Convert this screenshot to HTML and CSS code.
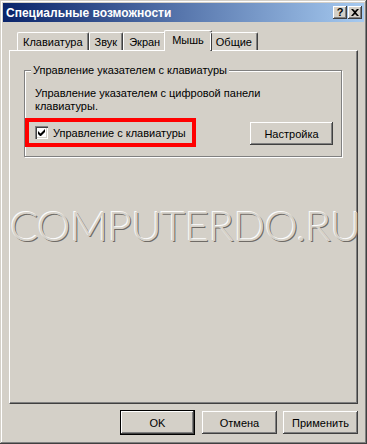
FILE: index.html
```html
<!DOCTYPE html>
<html lang="ru">
<head>
    <meta charset="UTF-8">
    <title>Специальные возможности</title>
    <link rel="stylesheet" href="styles.css">
</head>
<body>
    <div class="window">
        <div class="titlebar">
            <span class="title">Специальные возможности</span>
            <div class="caption-buttons">
                <span class="caption-btn">?</span>
                <span class="caption-btn">
                    <svg width="8" height="7" viewBox="0 0 8 7"><path d="M0 0h2l2 2 2-2h2L5 3.5 8 7H6L4 5 2 7H0l3-3.5z" fill="#000"/></svg>
                </span>
            </div>
        </div>

        <div class="tabs">
            <div class="tab">Клавиатура</div>
            <div class="tab">Звук</div>
            <div class="tab">Экран</div>
            <div class="tab active">Мышь</div>
            <div class="tab">Общие</div>
        </div>

        <div class="panel">
            <div class="group">
                <span class="group-title">Управление указателем с клавиатуры</span>
                <p class="group-desc">Управление указателем с цифровой панели<br>клавиатуры.</p>
                <div class="group-row">
                    <label class="highlight">
                        <span class="checkbox">
                            <svg width="7" height="7" viewBox="0 0 7 7"><path d="M0 2v3l2 2h1l4-4V0L2.5 4.5z" fill="#000"/></svg>
                        </span>
                        Управление с клавиатуры
                    </label>
                    <button class="btn">Настройка</button>
                </div>
            </div>

            <div class="watermark">COMPUTERDO.RU</div>
        </div>

        <div class="actions">
            <button class="btn default">OK</button>
            <button class="btn">Отмена</button>
            <button class="btn">Применить</button>
        </div>
    </div>
</body>
</html>
```

FILE: styles.css
```css
body {
    margin: 0;
    background: #D4D0C8;
    font-family: "Liberation Sans", Arial, sans-serif;
    font-size: 11px;
    color: #000;
}

.window {
    width: 367px;
    height: 444px;
    box-sizing: border-box;
    padding: 3px;
    background: #D4D0C8;
    box-shadow: inset -1px -1px #404040, inset 1px 1px #D4D0C8, inset -2px -2px #808080, inset 2px 2px #fff;
    display: flex;
    flex-direction: column;
}

.titlebar {
    height: 19px;
    background: linear-gradient(90deg, #0A246A 0%, #A6CAF0 100%);
    display: flex;
    align-items: center;
    justify-content: space-between;
    padding: 0 2px 0 3px;
}

.title {
    color: #fff;
    font-weight: bold;
    font-size: 12px;
}

.caption-buttons {
    display: flex;
    gap: 1px;
}

.caption-btn {
    width: 14px;
    height: 13px;
    box-sizing: border-box;
    background: #D4D0C8;
    box-shadow: inset -1px -1px #404040, inset 1px 1px #fff, inset -2px -2px #808080;
    display: flex;
    align-items: center;
    justify-content: center;
    font-weight: bold;
    font-size: 11px;
    line-height: 1;
}

.tabs {
    display: flex;
    align-items: flex-end;
    height: 20px;
    margin: 8px 0 0 14px;
    position: relative;
    z-index: 1;
}

.tab {
    height: 18px;
    box-sizing: border-box;
    padding: 0 5px;
    display: flex;
    align-items: center;
    border-top: 1px solid #fff;
    border-left: 1px solid #fff;
    border-right: 1px solid #404040;
    border-radius: 2px 2px 0 0;
    box-shadow: inset -1px 0 #808080;
    margin-top: 2px;
}

.tab.active {
    height: 21px;
    margin: 0 -2px -1px;
    padding: 0 7px 2px;
    background: #D4D0C8;
}

.panel {
    flex: 1;
    margin: 0 6px;
    border-top: 1px solid #fff;
    border-left: 1px solid #fff;
    border-right: 1px solid #404040;
    border-bottom: 1px solid #404040;
    box-shadow: inset -1px -1px #808080;
    padding: 19px 15px 0 14px;
    display: flex;
    flex-direction: column;
}

.group {
    position: relative;
    border: 1px solid #808080;
    box-shadow: inset 1px 1px #fff, 1px 1px #fff;
    padding: 16px 8px 9px 0;
}

.group-title {
    position: absolute;
    top: -7px;
    left: 6px;
    padding: 0 2px;
    background: #D4D0C8;
    line-height: 13px;
}

.group-desc {
    margin: 0 0 5px 10px;
    line-height: 13px;
}

.group-row {
    display: flex;
    align-items: center;
    justify-content: space-between;
}

.highlight {
    width: 171px;
    height: 29px;
    box-sizing: border-box;
    border: 4px solid #FF0000;
    padding-left: 6px;
    display: flex;
    align-items: center;
    gap: 5px;
}

.checkbox {
    width: 13px;
    height: 13px;
    box-sizing: border-box;
    background: #fff;
    box-shadow: inset 1px 1px #808080, inset 2px 2px #404040, inset -1px -1px #fff, inset -2px -2px #D4D0C8;
    display: flex;
    align-items: center;
    justify-content: center;
}

.btn {
    width: 75px;
    height: 23px;
    border: none;
    background: #D4D0C8;
    box-shadow: inset -1px -1px #404040, inset 1px 1px #fff, inset -2px -2px #808080, inset 2px 2px #D4D0C8;
    font-family: "Liberation Sans", Arial, sans-serif;
    font-size: 11px;
    color: #000;
    padding: 0;
}

.group-row .btn {
    width: 83px;
    margin-top: 2px;
}

.btn.default {
    width: 73px;
    box-shadow: 0 0 0 1px #000, inset -1px -1px #404040, inset 1px 1px #fff, inset -2px -2px #808080;
}

.watermark {
    margin: 46px -14px 0;
    text-align: center;
    font-family: Lato, sans-serif;
    font-weight: 300;
    font-size: 42px;
    letter-spacing: -0.6px;
    color: #D6D2CA;
    text-shadow: -1px -1px 0 #fbfbfb, 1px 1px 0 #6f6b66;
    line-height: 44px;
    white-space: nowrap;
}

.actions {
    display: flex;
    justify-content: flex-end;
    gap: 6px;
    margin: 7px 6px 7px 0;
}

.actions .btn.default {
    margin-right: 2px;
}
```
